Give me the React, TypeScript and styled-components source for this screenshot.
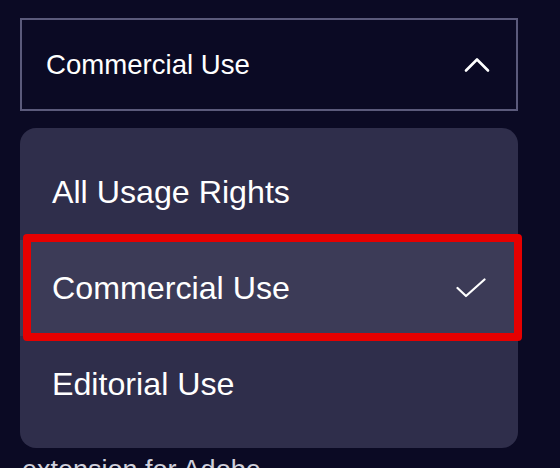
import React from "react";
import styled, { createGlobalStyle } from "styled-components";

const Global = createGlobalStyle`
  html, body {
    margin: 0;
    padding: 0;
    background: #0b0a24;
    overflow: hidden;
  }
  body {
    font-family: "Liberation Sans", Arial, sans-serif;
    -webkit-font-smoothing: antialiased;
  }
`;

const Page = styled.div`
  width: 560px;
  height: 468px;
  box-sizing: border-box;
  padding: 18px 0 0 20px;
  background: #0b0a24;
  overflow: hidden;
`;

const Column = styled.div`
  width: 498px;
  display: flex;
  flex-direction: column;
`;

const SelectBox = styled.div`
  height: 93px;
  box-sizing: border-box;
  border: 2px solid #5b5a7b;
  display: flex;
  align-items: center;
  justify-content: space-between;
  padding: 0 26px 0 24px;
  color: #ffffff;
  font-size: 27.6px;
`;

const Menu = styled.div`
  margin-top: 17px;
  background: #2f2e4b;
  border-radius: 16px;
  padding: 16px 0;
  display: flex;
  flex-direction: column;
`;

const Item = styled.div<{ $selected?: boolean }>`
  position: relative;
  height: 96px;
  display: flex;
  align-items: center;
  justify-content: space-between;
  padding: 0 32px;
  color: #ffffff;
  font-size: 32.2px;
  background: ${(p) => (p.$selected ? "#3c3b57" : "transparent")};
`;

const Highlight = styled.div`
  position: absolute;
  left: 3px;
  right: -4px;
  top: -6px;
  bottom: -5px;
  border: 8px solid #e60000;
  border-radius: 4px;
  pointer-events: none;
`;

const Caption = styled.div`
  margin-top: 7px;
  margin-left: 2px;
  color: #cfcfdb;
  font-size: 27px;
  line-height: 31px;
  white-space: nowrap;
`;

const Chevron = () => (
  <svg width="26" height="16" viewBox="0 0 26 16" fill="none">
    <path
      d="M2 13.5 L13 2.5 L24 13.5"
      stroke="#ffffff"
      strokeWidth="2.6"
      strokeLinecap="round"
      strokeLinejoin="round"
    />
  </svg>
);

const Check = () => (
  <svg width="30" height="20" viewBox="0 0 30 20" fill="none">
    <path
      d="M1.5 10 L10 18 L28.5 1.5"
      stroke="#ffffff"
      strokeWidth="2.2"
      strokeLinecap="round"
      strokeLinejoin="round"
    />
  </svg>
);

const options = ["All Usage Rights", "Commercial Use", "Editorial Use"];
const selected = "Commercial Use";

export default function App() {
  return (
    <>
      <Global />
      <Page>
        <Column>
          <SelectBox>
            <span>{selected}</span>
            <Chevron />
          </SelectBox>
          <Menu>
            {options.map((o) => (
              <Item key={o} $selected={o === selected}>
                <span>{o}</span>
                {o === selected && <Check />}
                {o === selected && <Highlight />}
              </Item>
            ))}
          </Menu>
          <Caption>extension for Adobe</Caption>
        </Column>
      </Page>
    </>
  );
}
